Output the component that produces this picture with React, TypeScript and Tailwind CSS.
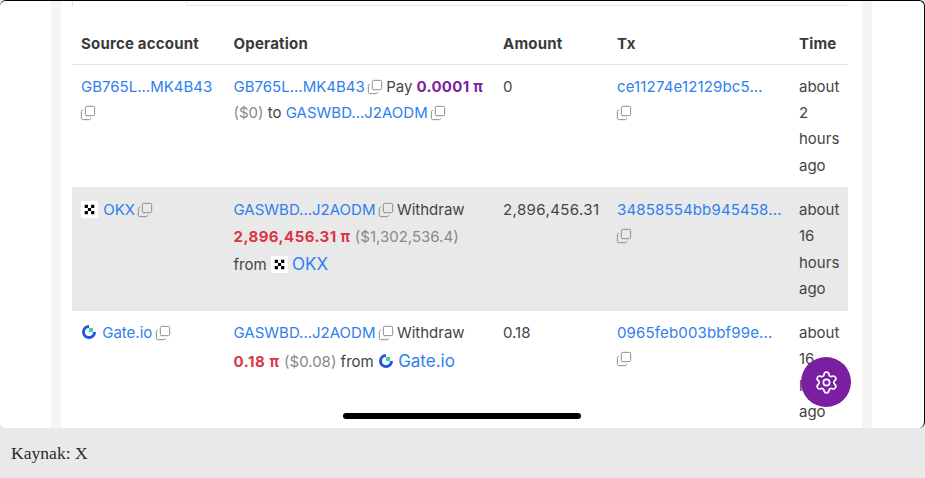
import { Copy, Settings } from "lucide-react";

function CopyIcon() {
  return <Copy className="-ml-[2px] -mr-[1px] inline-block h-[16px] w-[16px] text-[#8f8f8f] -scale-y-100 align-[-3px]" strokeWidth={1.5} />;
}

function A({ children, className = "" }: { children: React.ReactNode; className?: string }) {
  return <a className={`text-[#2f80ed] ${className}`}>{children}</a>;
}

function OkxLogo() {
  return (
    <svg viewBox="0 0 16 16" className="inline-block h-[17px] w-[17px] align-[-3px]">
      <rect width="16" height="16" fill="#fff" />
      <path d="M3.5 3.5h3v3h-3zM9.5 3.5h3v3h-3zM6.5 6.5h3v3h-3zM3.5 9.5h3v3h-3zM9.5 9.5h3v3h-3z" fill="#000" />
    </svg>
  );
}

function GateLogo() {
  return (
    <svg viewBox="0 0 16 16" className="inline-block h-[16px] w-[16px] align-[-2px]">
      <path d="M8 1a7 7 0 1 0 7 7h-3a4 4 0 1 1-4-4z" fill="#2354e6" />
      <rect x="8" y="4" width="4" height="4" fill="#2fd9a0" />
    </svg>
  );
}

const th = "text-left font-bold tracking-[0.2px] text-[#3a3a3a] px-[9px] h-[40px] align-middle";
const td = "align-top px-[9px] pt-[9px]";
const tdMid = "align-top px-[9px] pt-[10px]";

export default function App() {
  return (
    <div className="w-[925px] h-[478px] bg-[#e9e9e9] font-['Inter',sans-serif]">
      <div className="relative h-[428px] overflow-hidden rounded-[6px] border-t border-r border-black bg-white">
        <div className="mx-[51px] flex h-full justify-center bg-[#f5f5f5] px-[10px] w-[821px]">
          <div className="h-full w-full bg-white pl-[11px] pr-[13px]">
            <div className="flex h-[5px] border-b border-[#e5e7eb]">
              <div className="h-[5px] w-[115px] border-x border-[#e5e7eb] bg-white"></div>
            </div>
            <table className="mt-[18px] w-[776px] table-fixed border-collapse text-[15px] leading-[26.4px] text-[#444]">
              <colgroup>
                <col className="w-[152.5px]" />
                <col className="w-[269.5px]" />
                <col className="w-[114px]" />
                <col className="w-[182px]" />
                <col className="w-[58px]" />
              </colgroup>
              <thead>
                <tr className="border-b border-[#e3e5e8]">
                  <th className={th}>Source account</th>
                  <th className={th}>Operation</th>
                  <th className={th}>Amount</th>
                  <th className={th}>Tx</th>
                  <th className={th}>Time</th>
                </tr>
              </thead>
              <tbody>
                <tr className="h-[123px]">
                  <td className={td}>
                    <A>GB765L...MK4B43</A>
                    <div className="pl-[1px]"><CopyIcon /></div>
                  </td>
                  <td className={`${td} whitespace-nowrap`}>
                    <div>
                      <A>GB765L...MK4B43</A> <CopyIcon /> Pay <b className="tracking-[0.3px] text-[#7b1fa2]">0.0001 π</b>
                    </div>
                    <div>
                      <span className="text-[#888]">($0)</span> to <A>GASWBD...J2AODM</A> <CopyIcon />
                    </div>
                  </td>
                  <td className={td}>0</td>
                  <td className={td}>
                    <A className="tracking-[0.15px]">ce11274e12129bc5...</A>
                    <div className="pl-[1px]"><CopyIcon /></div>
                  </td>
                  <td className={td}>about 2 hours ago</td>
                </tr>
                <tr className="h-[124px] bg-[#e9e9e9]">
                  <td className={tdMid}>
                    <OkxLogo /> <A className="ml-[1px]">OKX</A> <CopyIcon />
                  </td>
                  <td className={`${tdMid} whitespace-nowrap`}>
                    <div>
                      <A>GASWBD...J2AODM</A> <CopyIcon /> Withdraw
                    </div>
                    <div className="mt-[1px]">
                      <b className="tracking-[0.45px] text-[#dc3545]">2,896,456.31 π</b> <span className="text-[#888]">($1,302,536.4)</span>
                    </div>
                    <div>
                      from <OkxLogo /> <A className="text-[17px]">OKX</A>
                    </div>
                  </td>
                  <td className={`${tdMid} tracking-[0.4px]`}>2,896,456.31</td>
                  <td className={tdMid}>
                    <A className="tracking-[0.15px]">34858554bb945458...</A>
                    <div className="pl-[1px]"><CopyIcon /></div>
                  </td>
                  <td className={tdMid}>about 16 hours ago</td>
                </tr>
                <tr>
                  <td className={td}>
                    <GateLogo /> <A className="ml-[1px]">Gate.io</A> <CopyIcon />
                  </td>
                  <td className={`${td} whitespace-nowrap`}>
                    <div>
                      <A>GASWBD...J2AODM</A> <CopyIcon /> Withdraw
                    </div>
                    <div className="mt-[2px]">
                      <b className="tracking-[0.6px] text-[#dc3545]">0.18 π</b> <span className="text-[#888]">($0.08)</span> from <GateLogo /> <A className="text-[17px]">Gate.io</A>
                    </div>
                  </td>
                  <td className={td}>0.18</td>
                  <td className={td}>
                    <A className="tracking-[0.15px]">0965feb003bbf99e...</A>
                    <div className="pl-[1px]"><CopyIcon /></div>
                  </td>
                  <td className={td}>about 16 hours ago</td>
                </tr>
              </tbody>
            </table>
          </div>
        </div>
        <div className="absolute left-[343px] top-[412px] h-[6px] w-[238px] rounded-full bg-black"></div>
        <div className="absolute left-[801px] top-[356px] flex h-[50px] w-[50px] items-center justify-center rounded-full bg-[#7b1fa2]">
          <Settings className="h-[25px] w-[25px] text-white" strokeWidth={1.6} />
        </div>
      </div>
      <div className="flex h-[50px] items-center pl-[11px] pt-[1px] font-['Liberation_Serif',serif] text-[17.6px] text-[#2a2a2a]">Kaynak: X</div>
    </div>
  );
}
